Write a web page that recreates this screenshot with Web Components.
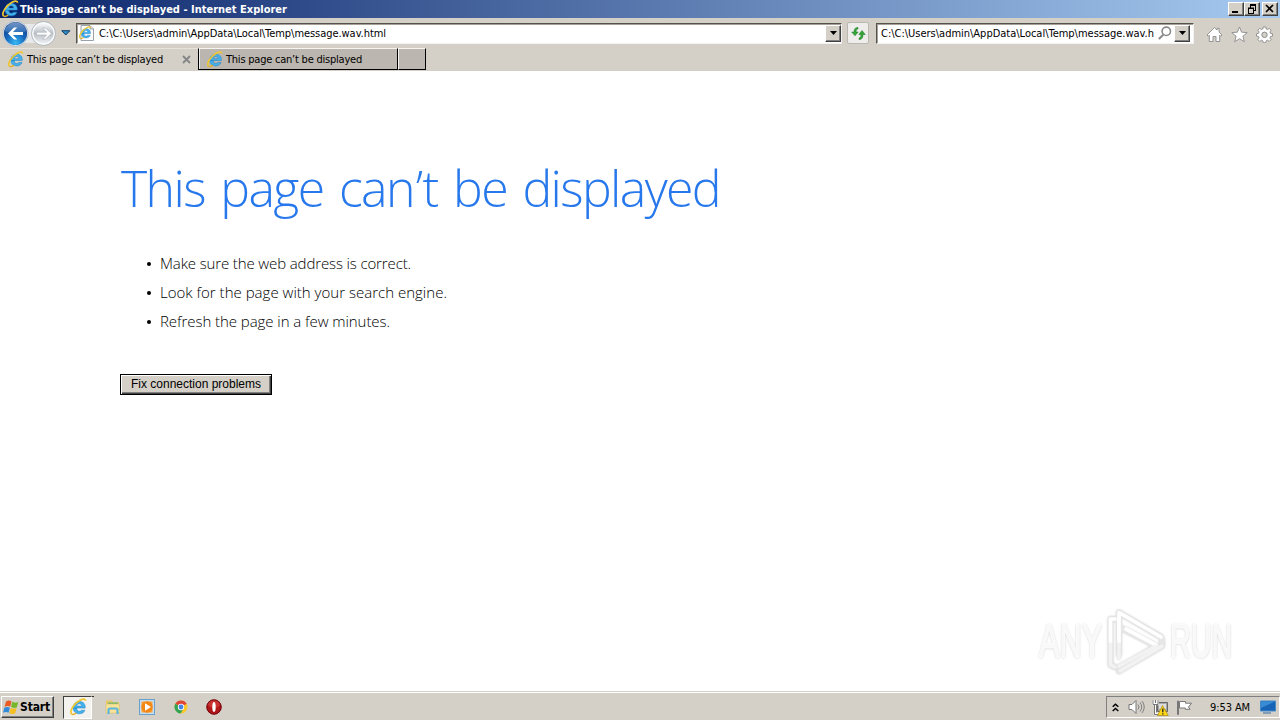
<!DOCTYPE html>
<html lang="en"><head><meta charset="utf-8"><title>This page can’t be displayed</title>
<style>html,body{margin:0;height:100%;overflow:hidden;background:#fff}</style></head>
<body><desktop-screen></desktop-screen>
<script>
const define=(name,html,ready)=>customElements.define(name,class extends HTMLElement{
  connectedCallback(){if(this.shadowRoot)return;const t=document.createElement('template');t.innerHTML=typeof html==='function'?html(this):html;
    this.attachShadow({mode:'open'}).append(t.content.cloneNode(true));if(ready)ready(this);}
});

// Single-line label; "w" is the width its text is tracked out to.
define('fit-label','<style>:host{display:block;white-space:pre;flex:none}span{display:inline-block}</style><span><slot></slot></span>',el=>{
  const w=+el.getAttribute('w'),s=el.shadowRoot.querySelector('span');
  if(w){const n=s.firstChild.assignedNodes({flatten:true}).reduce((a,x)=>a+x.textContent.length,0);
    if(n)s.style.letterSpacing=((w-s.getBoundingClientRect().width)/n)+'px';}
});

const E=`<path d="M5 10.1h11.2c.5-4-2-6.600-5.700-6.600-4 0-6.400 2.600-6.400 6.300 0 3.600 2.500 6 6.300 6 2.700 0 4.700-1.300 5.500-3.600h-3.500c-.5.7-1.100 1-2 1-1.700 0-2.600-1-2.700-3.100zM7.800 8.100c.2-1.500 1.200-2.300 2.500-2.300s2.200.8 2.300 2.300z" fill="#45b0ea" stroke="#1c80c6" stroke-width=".5"/><path d="M2.700 16.200C-.2 13.500 5.200 5.400 11 2.300c3-1.600 5.600-1.700 5.500.5" fill="none" stroke="#f0c62e" stroke-width="1.700"/><path d="M2.700 16.200c1 .7 2.800.1 4.500-1" fill="none" stroke="#e0b024" stroke-width="1.400"/>`;
const icons={
 ie:[18,18,E],
 page:[16,16,`<path d="M2 .5h9l3.500 3.500v11.500H2z" fill="#fff" stroke="#98a2ad"/><path d="M11 .5V4h3.500" fill="#dce5ee" stroke="#98a2ad"/><g transform="translate(-.8 1) scale(.76)">${E}</g>`],
 back:[60,27,`<defs><radialGradient id="b" cy=".9" r=".85"><stop stop-color="#37b8f4"/><stop offset=".5" stop-color="#1767bb"/><stop offset="1" stop-color="#123c82"/></radialGradient><linearGradient id="s" x2="0" y2="1"><stop stop-color="#a8c4e8"/><stop offset="1" stop-color="#3373bd"/></linearGradient><linearGradient id="f" x2="0" y2="1"><stop stop-color="#f7f8fa"/><stop offset=".5" stop-color="#b9bfc6"/><stop offset="1" stop-color="#eef1f4"/></linearGradient></defs><rect x="12" y="4" width="32" height="19" fill="#e7e8ea"/><circle cx="14.500" cy="13.500" r="12.700" fill="#e6edf5" stroke="#9aa6b5" stroke-width=".6"/><circle cx="14.500" cy="13.500" r="11.600" fill="url(#b)"/><path d="M3.500 11a11.300 11.300 0 0 1 22 0c-4 3-17 3-22 0z" fill="url(#s)" opacity=".65"/><path d="M7 13.500l6-6h3.200l-4.200 4.500H22v3H12l4.200 4.500h-3.200z" fill="#fff"/><circle cx="42.500" cy="13.500" r="12" fill="#fafbfc" stroke="#a0a6ad" stroke-width=".8"/><circle cx="42.500" cy="13.500" r="10" fill="url(#f)"/><path d="M50.500 13.500l-6-5.500h-3l4.200 4.200H35.500v2.800h10.200l-4.200 4.200h3z" fill="#fff" stroke="#aeb4ba" stroke-width=".7"/>`],
 drop:[10,6,`<path d="M.7.700h8.200L4.800 5z" fill="#2e8bc2" stroke="#123d68" stroke-width="1"/>`],
 arrow:[7,4,`<path d="M0 0h7L3.500 4z"/>`],
 refresh:[15,15,`<g fill="#36a43b" stroke="#177c22" stroke-width=".5"><path d="M7 1.500C4 1.500 3 3 3 6H.7L4 9.800 7.200 6H5.100c0-2 .4-2.700 1.900-3z"/><path d="M8 13.500c3 0 4-1.500 4-5h2.300L11 4.500 7.800 8.500h2.100c0 2.500-.4 3.200-1.900 3.600z"/></g>`],
 search:[14,14,`<circle cx="8.300" cy="5.300" r="4.200" fill="#fff" stroke="#8a8a8a" stroke-width="1.600"/><path d="M5.300 8.700L.8 13" stroke="#8a8a8a" stroke-width="2"/>`],
 home:[17,17,`<path d="M1 9L8.500 1.500l2.600 2.600V2.300h2v3.800L16 9l-1.300 1.200-1-1v6.300H10v-5H7v5H3.300V9.200l-1 1z" fill="#fff" stroke="#8b8b8b" stroke-width=".9"/>`],
 star:[17,17,`<path d="M8.500 1l2.100 5.200 5.600.4-4.300 3.600 1.400 5.500-4.800-3-4.800 3 1.400-5.500L.8 6.600l5.600-.4z" fill="#fff" stroke="#8b8b8b" stroke-width=".9"/>`],
 gear:[17,17,`<path d="M7.200 1h2.600l.4 2 1.300.6 1.800-1.200 1.800 1.800-1.200 1.800.6 1.300 2 .4v2.400l-2 .4-.6 1.400 1.200 1.700-1.800 1.800-1.800-1.200-1.300.6-.4 2H7.200l-.4-2-1.300-.6-1.800 1.200-1.800-1.800 1.200-1.700-.6-1.400-2-.4V7.700l2-.4.6-1.300-1.200-1.800 1.800-1.800 1.800 1.200L6.800 3z" fill="#fff" stroke="#8b8b8b" stroke-width=".9"/><circle cx="8.500" cy="8.800" r="2.700" fill="#d4d0c8" stroke="#8b8b8b"/>`],
 close:[9,9,`<path d="M1 1l7 7M8 1L1 8" stroke="#858585" stroke-width="1.800"/>`],
 min:[12,10,`<path d="M2 7h6v2H2z"/>`],
 restore:[12,10,`<path d="M4 .5h6M4 1.500h6M4.500 1v3M9.500 1v5M7 6.500h3M2 4h6M2 4.500h6M2.500 4v5M7.500 4v5M2 9.500h6" fill="none" stroke="#000"/>`],
 x:[12,10,`<path d="M2 1l7 7M9 1L2 8" stroke="#000" stroke-width="1.700"/>`],
 win:[17,17,`<path d="M3 2.500q3-1.800 5.500-.1L7.200 7.800q-2.500-1.600-5.600.1z" fill="#e95a24"/><path d="M9.300 2.800q3 1.600 6 .1l-1.400 5.300q-3 1.500-5.900-.1z" fill="#76b82a"/><path d="M1.300 8.800q3-1.700 5.600-.1l-1.300 5q-2.600-1.500-5.600 0z" fill="#328bd8"/><path d="M7.700 9q3 1.600 5.900.1l-1.300 5.200q-3 1.400-5.900-.1z" fill="#f5bf21"/>`],
 folder:[16,16,`<path d="M1 3V1.500h6L8 3h6v10H1z" fill="#e9c762"/><path d="M3 3.500h10v4H3z" fill="#6ebc79"/><path d="M1 5h13l1 9H1z" fill="#f7e398" stroke="#d5b654" stroke-width=".5"/><path d="M3.500 15v-4q0-1.500 1.500-1.500h6q1.500 0 1.500 1.500v4" fill="none" stroke="#5db5dc" stroke-width="2.200"/>`],
 media:[16,16,`<rect x=".5" y=".5" width="15" height="15" fill="#c4dff4" stroke="#6ba0cd"/><rect x="2.500" y="2.500" width="11" height="11" fill="#f7a43a"/><circle cx="8" cy="8" r="5.700" fill="#f48713"/><path d="M6 4.300v7.400L12 8z" fill="#fff"/>`],
 chrome:[14,14,`<circle cx="7" cy="7" r="6.500" fill="#fbc928"/><path d="M7 7L1.300 3.800A6.500 6.500 0 0 1 12.700 3.800z" fill="#df4436"/><path d="M7 7L1.300 3.800A6.500 6.500 0 0 0 6.500 13.500L9.700 8.500z" fill="#34a354"/><circle cx="7" cy="7" r="3.200" fill="#fff"/><circle cx="7" cy="7" r="2.400" fill="#4583e7"/>`],
 opera:[16,16,`<circle cx="8" cy="8" r="7.500" fill="#b01519"/><ellipse cx="8" cy="5" rx="6" ry="4" fill="#df4b46" opacity=".55"/><circle cx="8" cy="8" r="7.200" fill="none" stroke="#70090d"/><ellipse cx="8" cy="8" rx="1.700" ry="4.900" fill="#fff"/>`],
 chevrons:[7,9,`<path d="M.7 3.800l2.800-2.500 2.800 2.500M.7 8l2.800-2.500L6.300 8" fill="none" stroke="#000" stroke-width="1.500"/>`],
 speaker:[17,16,`<path d="M1 5.500h3L8 1.500v13l-4-4H1z" fill="#fff" stroke="#777"/><path d="M10 5.500q2 2.500 0 5M12 3.500q3.500 4.500 0 9M14 2q4.500 6 0 12" fill="none" stroke="#777" stroke-width=".9"/>`],
 network:[17,17,`<path d="M5.500 3.500h10v9h-10z" fill="#a7a7a7" stroke="#666"/><path d="M7 5h7v5H7z" fill="#ddd"/><path d="M1.500 1v4h4V1M3.500 5v10h5" fill="none" stroke="#fff" stroke-width="2.500"/><path d="M1 1v4.500h5V1M3.500 1v3M2.500 6v9.500H8M4.500 6v7.500" fill="none" stroke="#555" stroke-width=".8"/><path d="M10.500 6.500l5.800 10H5.500z" fill="#ffd817" stroke="#a88811" stroke-width=".7"/><path d="M10.800 9.500v3.800M10.800 14.300v1.200" stroke="#222" stroke-width="1.300"/>`],
 flag:[17,15,`<path d="M2 .7v14" stroke="#777" stroke-width="2"/><path d="M3.500 1.500h6v1.700h6L12.500 7l1.500 2.300H9.300V8H3.500z" fill="#fff" stroke="#777"/>`],
 monitor:[16,14,`<path d="M.5 1h15v10H.5z" fill="#1764b6" stroke="#4689c8"/><path d="M1 1.500h14L1 8z" fill="#398bd4"/><path d="M3 13h8" stroke="#668db2" stroke-width="1.500"/>`],
 logo:[61,66,`<g fill="none" stroke-linejoin="round" stroke-linecap="round"><g stroke="#e6e6e6" stroke-width="5.500"><path d="M9 11H4.500V57L9 59"/><path d="M13 46V4.500L55 29M13 19L50 38L13 60"/><path d="M13 63L56 38V32"/></g><g stroke="#fff" stroke-width="3.700"><path d="M9 11H4.500V34"/><path d="M13 34V4.500L55 29M20 21L50 37"/></g><g stroke="#f2f2f2" stroke-width="3.300"><path d="M4.500 36V57L9 59M13 36v14M50 38L13 58M14 63L56 38"/></g></g>`]
};
define('ui-icon',el=>{const [w,h,p]=icons[el.getAttribute('name')];return `<style>:host{display:block;flex:none;width:${el.getAttribute('size')||w}px}svg{display:block;width:100%;height:auto}</style><svg viewBox="0 0 ${w} ${h}">${p}</svg>`;});

define('raised-button',`<style>:host{display:flex;align-items:center;justify-content:center;box-sizing:border-box;flex:none;background:#d4d0c8;border:1px solid;border-color:#fff #404040 #404040 #fff;box-shadow:inset -1px -1px #808080}</style><slot></slot>`);
define('address-field',`<style>:host{display:flex;align-items:center;box-sizing:border-box;height:21px;background:#fff;border:1px solid;border-color:#55514b #f4f2ee #f4f2ee #55514b;box-shadow:inset 1px 1px #a5a199;overflow:hidden;flex:none}</style><slot></slot>`);

define('title-bar',`<style>:host{display:flex;align-items:center;height:18px;box-sizing:border-box;padding:0 2px 0 1px;background:linear-gradient(90deg,#0a246a,#a6caf0);color:#fff;font:bold 11px "DejaVu Sans Condensed","DejaVu Sans",sans-serif}
.grow{flex:1}fit-label{margin-left:1px}raised-button{width:16px;height:14px}.close{margin-left:2px}</style>
<ui-icon name="ie"></ui-icon><fit-label w="267">This page can’t be displayed - Internet Explorer</fit-label><div class="grow"></div>
<raised-button><ui-icon name="min"></ui-icon></raised-button><raised-button><ui-icon name="restore"></ui-icon></raised-button><raised-button class="close"><ui-icon name="x"></ui-icon></raised-button>`);

define('nav-bar',`<style>:host{display:flex;align-items:center;height:30px;box-sizing:border-box;padding:0 7px 0 1px}
.main{width:766px;margin-left:5px;padding-left:2px}.main fit-label{margin-left:4px}
fit-label{padding-top:1px}
.grow{flex:1}.field-button{width:16px;height:17px}.refresh{width:22px;height:22px;box-sizing:border-box;margin-left:5px;background:#eeedeb;border:1px solid #bbb7b1;border-radius:2px;display:grid;place-items:center}
.second{width:318px;margin-left:7px;padding:0 3px 0 4px}.second raised-button{margin-left:2px}
.tools{display:flex;gap:8px;margin:3px 0 0}</style>
<ui-icon name="back"></ui-icon><ui-icon name="drop"></ui-icon>
<address-field class="main"><ui-icon name="page"></ui-icon><fit-label w="287">C:\\C:\\Users\\admin\\AppData\\Local\\Temp\\message.wav.html</fit-label><div class="grow"></div><raised-button class="field-button"><ui-icon name="arrow"></ui-icon></raised-button></address-field>
<div class="refresh"><ui-icon name="refresh"></ui-icon></div>
<address-field class="second"><fit-label w="273">C:\\C:\\Users\\admin\\AppData\\Local\\Temp\\message.wav.h</fit-label><div class="grow"></div><ui-icon name="search"></ui-icon><raised-button class="field-button"><ui-icon name="arrow"></ui-icon></raised-button></address-field><div class="grow"></div>
<div class="tools"><ui-icon name="home"></ui-icon><ui-icon name="star"></ui-icon><ui-icon name="gear"></ui-icon></div>`);

define('browser-tab',`<style>:host{display:flex;align-items:center;box-sizing:border-box;height:22px;padding-left:7px;flex:none;border:1px solid;border-color:#f7f5f1 #000 #000 #f7f5f1;background:#bbb6af}
:host([active]){background:#d4d0c8;border-color:#e6e2dc transparent transparent;border-left:0}fit-label{margin-left:3px;padding-top:1px}</style><ui-icon name="ie" size="17"></ui-icon><fit-label w="136"><slot></slot></fit-label><slot name="close"></slot>`);
define('tab-strip',`<style>:host{display:flex;height:23px;box-sizing:border-box;background:#d4d0c8}
.one{width:198px}.two{width:200px;border-left-color:#000;box-shadow:inset 1px 0 #eee}.new{width:28px;height:22px;box-sizing:border-box;background:#bbb6af;border:1px solid;border-color:#f7f5f1 #000 #000 #f7f5f1}
.one ui-icon{margin-left:19px}</style>
<browser-tab class="one" active>This page can’t be displayed<ui-icon name="close" slot="close"></ui-icon></browser-tab><browser-tab class="two">This page can’t be displayed</browser-tab><div class="new"></div>`);

define('error-page',`<style>:host{display:block;flex:1;min-height:0;box-sizing:border-box;padding:85px 0 0 120px;position:relative;font:300 15px/29px "Open Sans","Noto Sans",sans-serif;color:#000}
h1{margin:0;font:300 50px/64px "Open Sans","Noto Sans",sans-serif;color:#2778ec;word-spacing:4px}h1 fit-label{margin-left:1px}h1 i{font-style:normal;margin:0 1px 0 2px}
ul{list-style:none;margin:29px 0 0;padding:0 0 0 27px}li{display:flex;align-items:center;height:29px}li:before{content:"";width:4px;height:4px;border-radius:2px;background:#000;margin-right:9px}
.fix{width:152px;height:21px;margin-top:38px;padding-bottom:2px;border:1px solid #000;box-shadow:inset 1px 1px #fff,inset -1px -1px #404040,inset -2px -2px #808080;font:12px/14px "Liberation Sans",sans-serif}
.mark{position:absolute;left:1039px;top:536px;display:flex;align-items:center;height:68px;font:48px/60px "Liberation Sans",sans-serif}
.word{display:block;width:63px;transform-origin:0 50%;white-space:nowrap;-webkit-text-stroke:2px #fafafa;color:#f8f8f8;text-shadow:0 0 2px #bbb,0 1px 3px #ccc}
.any{transform:scaleX(.64)}.run{transform:scaleX(.6);margin-left:3px}.mark ui-icon{margin-left:4px;filter:drop-shadow(0 0 1px #ccc)}</style>
<h1><fit-label w="599">This page can<i>’</i>t be displayed</fit-label></h1>
<ul><li><fit-label w="251">Make sure the web address is correct.</fit-label></li><li><fit-label w="287">Look for the page with your search engine.</fit-label></li><li><fit-label w="230">Refresh the page in a few minutes.</fit-label></li></ul>
<raised-button class="fix"><fit-label w="130">Fix connection problems</fit-label></raised-button>
<div class="mark"><span class="word any">ANY</span><ui-icon name="logo"></ui-icon><span class="word run">RUN</span></div>`);

define('task-bar',`<style>:host{display:flex;align-items:center;height:29px;box-sizing:border-box;border-top:1px solid #d4d0c8;box-shadow:inset 0 1px #fff;background:#d4d0c8;padding:2px 0 0 1px}
.start{width:53px;height:22px;font-weight:bold;font-size:12px;justify-content:flex-start;padding-left:1px}.start fit-label{margin-left:0}
.active{display:flex;align-items:center;justify-content:center;box-sizing:border-box;width:29px;height:23px;margin-left:9px;background:#f4f2ef;border:1px solid;border-color:#404040 #fff #fff #404040}.edge{width:3px;height:23px;border-left:1px solid #fff;border-top:1px solid #333;box-sizing:border-box;margin-left:-1px}
.apps{display:flex;align-items:center;gap:18px;margin-left:11px}.apps ui-icon:nth-child(3){margin-left:1px}.grow{flex:1}
.tray{display:flex;align-items:center;width:174px;height:22px;box-sizing:border-box;border:1px solid;border-color:#808080 #fff #fff #808080;padding:0 3px 0 5px}.s{margin-left:9px}.n{margin-left:7px}.f{margin-left:7px}.clock{margin-left:17px}.m{margin-left:10px}</style>
<raised-button class="start"><ui-icon name="win"></ui-icon><fit-label w="30">Start</fit-label></raised-button><div class="active"><ui-icon name="ie"></ui-icon></div><div class="edge"></div>
<div class="apps"><ui-icon name="folder"></ui-icon><ui-icon name="media"></ui-icon><ui-icon name="chrome"></ui-icon><ui-icon name="opera"></ui-icon></div><div class="grow"></div>
<div class="tray"><ui-icon name="chevrons"></ui-icon><ui-icon class="s" name="speaker"></ui-icon><ui-icon class="n" name="network"></ui-icon><ui-icon class="f" name="flag"></ui-icon><fit-label class="clock" w="40">9:53 AM</fit-label><ui-icon class="m" name="monitor"></ui-icon></div>`);

define('desktop-screen',`<style>:host{display:flex;flex-direction:column;width:1280px;height:720px;overflow:hidden;font:11px "DejaVu Sans Condensed","DejaVu Sans",sans-serif;color:#000}.chrome{background:#d4d0c8;flex:none}</style>
<div class="chrome"><title-bar></title-bar><nav-bar></nav-bar><tab-strip></tab-strip></div><error-page></error-page><task-bar></task-bar>`);
</script></body></html>
